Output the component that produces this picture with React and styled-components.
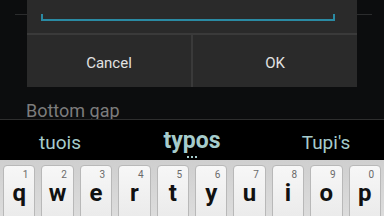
import React from 'react';
import styled, { createGlobalStyle } from 'styled-components';

const Global = createGlobalStyle`
  html, body { margin: 0; padding: 0; background: #0c0d0e; }
  body { font-family: Roboto, 'Liberation Sans', sans-serif; }
`;

const Screen = styled.div`
  width: 384px;
  height: 216px;
  overflow: hidden;
  display: flex;
  flex-direction: column;
  background: #0c0d0e;
`;

const Settings = styled.div`
  height: 119px;
  flex-shrink: 0;
  overflow: hidden;
  display: flex;
  flex-direction: column;
  background-image: linear-gradient(#2b2c2d, #2b2c2d);
  background-size: 357px 1px;
  background-position: 15px 14px;
  background-repeat: no-repeat;
`;

const Dialog = styled.div`
  margin: 0 27px;
  height: 87px;
  flex-shrink: 0;
  background: #2a2a2a;
  display: flex;
  flex-direction: column;
`;

const FieldArea = styled.div`
  height: 35px;
  padding: 14px 22px 0 14px;
  box-sizing: border-box;
  border-bottom: 2px solid #3a3a3a;
`;

const Field = styled.div`
  height: 5px;
  border: 2px solid #2a8aa3;
  border-top: none;
`;

const Buttons = styled.div`
  flex: 1;
  display: flex;
`;

const Button = styled.div`
  flex: 1;
  display: flex;
  align-items: center;
  justify-content: center;
  color: #e2e2e2;
  font-size: 15px;
  padding-top: 3px;
  & + & { border-left: 2px solid #3a3a3a; }
`;

const Label = styled.div`
  margin: 15px 0 0 26px;
  font-size: 18px;
  line-height: 18px;
  color: #7c7c7c;
`;

const Strip = styled.div`
  height: 41px;
  flex-shrink: 0;
  background: #000;
  border-top: 1px solid #2e2e2e;
  box-sizing: border-box;
  display: grid;
  grid-template-columns: 120px 144px 120px;
`;

const Suggestion = styled.div`
  display: flex;
  flex-direction: column;
  align-items: center;
  justify-content: center;
  color: #a6cccc;
  font-size: ${p => (p.$main ? '23px' : '19px')};
  font-weight: ${p => (p.$main ? 700 : 400)};
  line-height: 1;
  padding-top: ${p => (p.$main ? '6px' : '4px')};
  transform: translateX(${p => p.$dx || 0}px);
`;

const Dots = styled.div`
  display: flex;
  gap: 2px;
  margin-top: 4px;
  & span {
    width: 2px;
    height: 2px;
    background: #a6cccc;
  }
`;

const Keyboard = styled.div`
  flex: 1;
  min-height: 0;
  overflow: hidden;
  background: linear-gradient(#cfcfcf, #dcdcdc);
  padding: 5px 3px 0;
  display: grid;
  grid-template-columns: repeat(10, 1fr);
  gap: 6px;
`;

const Key = styled.div`
  height: 60px;
  background: linear-gradient(#f7f7f7, #e9e9e9);
  border: 1px solid #b8b8b8;
  border-radius: 4px;
  box-sizing: border-box;
  display: flex;
  flex-direction: column;
`;

const Num = styled.div`
  margin-top: 3px;
  padding-right: 6px;
  text-align: right;
  font-size: 10px;
  line-height: 12px;
  color: #6a6a6a;
`;

const Letter = styled.div`
  text-align: center;
  font-size: 24px;
  line-height: 24px;
  font-weight: 700;
  color: #111;
`;

const keys = [
  ['q', '1'], ['w', '2'], ['e', '3'], ['r', '4'], ['t', '5'],
  ['y', '6'], ['u', '7'], ['i', '8'], ['o', '9'], ['p', '0'],
];

export default function App() {
  return (
    <Screen>
      <Global />
      <Settings>
        <Dialog>
          <FieldArea>
            <Field />
          </FieldArea>
          <Buttons>
            <Button>Cancel</Button>
            <Button>OK</Button>
          </Buttons>
        </Dialog>
        <Label>Bottom gap</Label>
      </Settings>
      <Strip>
        <Suggestion>tuois</Suggestion>
        <Suggestion $main>
          typos
          <Dots><span /><span /><span /></Dots>
        </Suggestion>
        <Suggestion $dx={2}>Tupi's</Suggestion>
      </Strip>
      <Keyboard>
        {keys.map(([l, n]) => (
          <Key key={l}>
            <Num>{n}</Num>
            <Letter>{l}</Letter>
          </Key>
        ))}
      </Keyboard>
    </Screen>
  );
}
